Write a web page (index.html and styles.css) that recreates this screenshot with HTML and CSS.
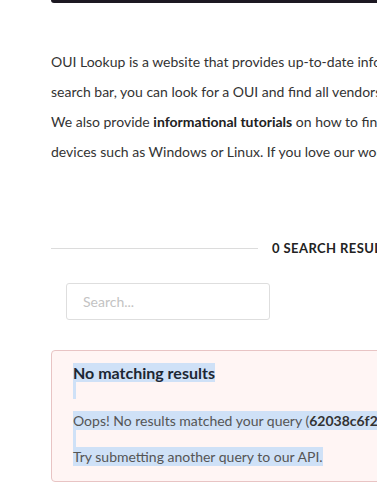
FILE: index.html
```html
<!DOCTYPE html>
<html lang="en">
<head>
  <meta charset="UTF-8" />
  <title>OUI Lookup</title>
  <link rel="stylesheet" href="styles.css">
</head>
<body>
  <div class="page">
    <div class="topbar"></div>

    <p class="intro">
      <span class="line">OUI Lookup is a website that provides up-to-date information on OUI vendors. Using our</span>
      <span class="line">search bar, you can look for a OUI and find all vendors associated with it.</span>
      <span class="line">We also provide <strong>informational tutorials</strong> on how to find MAC addresses on</span>
      <span class="line">devices such as Windows or Linux. If you love our work, share it with your friends!</span>
    </p>

    <div class="results-title">
      <span class="rule"></span>
      <h3>0 Search Results</h3>
      <span class="rule"></span>
    </div>

    <div class="search">
      <input type="text" placeholder="Search...">
    </div>

    <div class="alert">
      <div class="alert-title"><span class="sel">No matching results</span></div>
      <span class="sel-gap"></span>
      <div class="alert-body">
        <span class="sel">Oops! No results matched your query (<strong>62038c6f2c</strong>).</span>
        <span class="sel-gap"></span>
        <span class="sel">Try submetting another query to our API.</span>
      </div>
    </div>
  </div>
</body>
</html>
```

FILE: styles.css
```css
* {
  box-sizing: border-box;
}
html, body {
  margin: 0;
  padding: 0;
  background: #ffffff;
  font-family: Lato, 'Open Sans', sans-serif;
  color: #333;
  overflow: hidden;
}
.page {
  width: 620px;
  margin-left: 51px;
}
.topbar {
  height: 3px;
  background: #1c1822;
  border-radius: 0 0 0 4px;
}
.intro {
  margin: 44px 0 0;
  font-size: 14px;
  line-height: 30px;
  color: #333;
}
.intro .line {
  display: block;
  white-space: nowrap;
}
.intro strong {
  color: #222;
}
.results-title {
  display: flex;
  align-items: center;
  gap: 14px;
  margin-top: 73px;
  width: 566px;
}
.results-title .rule {
  flex: 1;
  height: 1px;
  background: #dcdcdc;
}
.results-title h3 {
  margin: 0;
  font-size: 13px;
  font-weight: bold;
  text-transform: uppercase;
  letter-spacing: 0.4px;
  color: #222;
  white-space: nowrap;
}
.search {
  padding: 27px 0 0 15px;
}
.search input {
  width: 204px;
  height: 37px;
  padding: 0 16px;
  border: 1px solid #dedede;
  border-radius: 3px;
  font-family: Lato, sans-serif;
  font-size: 14px;
  color: #333;
}
.search input::placeholder {
  color: #c3c3c3;
}
.alert {
  margin-top: 30px;
  height: 132px;
  padding: 12px 21px 0;
  background: #fff5f4;
  border: 1px solid #e8c4c4;
  border-radius: 4px;
  white-space: nowrap;
}
.sel {
  background: #cfe1f7;
}
.sel-gap {
  display: block;
  width: 3px;
  height: 17px;
  background: #cfe1f7;
}
.alert-title {
  font-size: 16px;
  font-weight: bold;
  line-height: 19px;
  color: #1d2733;
}
.alert-body {
  margin-top: 12px;
  font-size: 14px;
  line-height: 19px;
  color: #555;
}
.alert-body .sel {
  display: inline-block;
}
.alert-body strong {
  color: #333;
}
```
